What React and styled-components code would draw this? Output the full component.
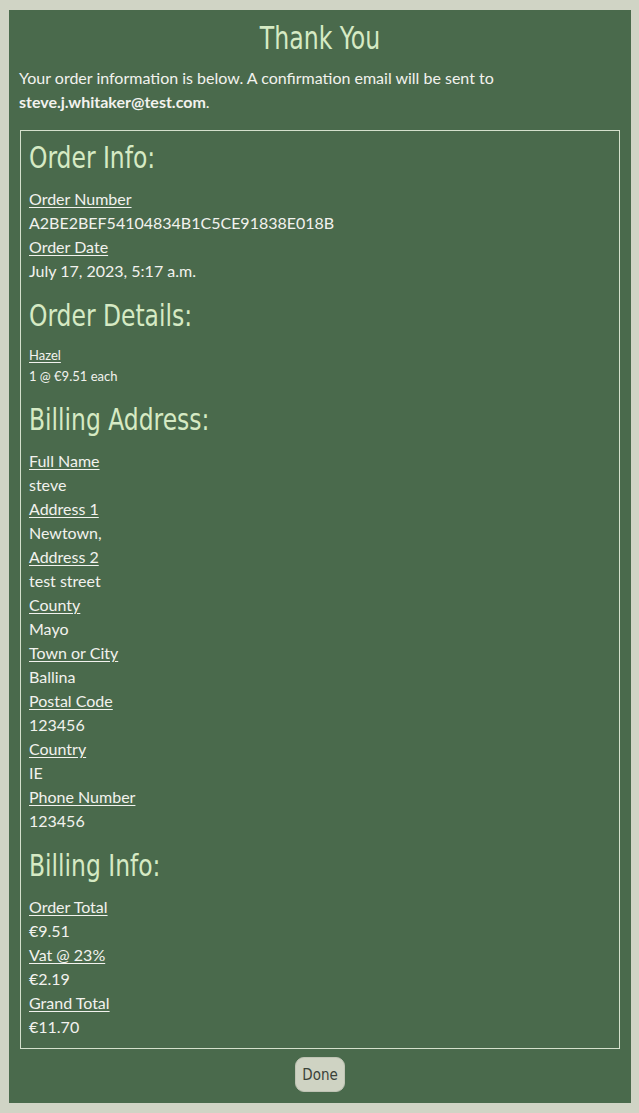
import React from 'react'
import styled, { createGlobalStyle } from 'styled-components'

const GlobalStyle = createGlobalStyle`
  html, body {
    margin: 0;
    padding: 0;
    background: #d0d4c5;
  }
  body {
    font-family: Lato, "Open Sans", sans-serif;
  }
`

const details = {
  number: 'A2BE2BEF54104834B1C5CE91838E018B',
  date: 'July 17, 2023, 5:17 a.m.',
}

const billing = [
  ['Full Name', 'steve'],
  ['Address 1', 'Newtown,'],
  ['Address 2', 'test street'],
  ['County', 'Mayo'],
  ['Town or City', 'Ballina'],
  ['Postal Code', '123456'],
  ['Country', 'IE'],
  ['Phone Number', '123456'],
]

const totals = [
  ['Order Total', '€9.51'],
  ['Vat @ 23%', '€2.19'],
  ['Grand Total', '€11.70'],
]

function App() {
  return (
    <>
      <GlobalStyle />
      <Page>
        <Panel>
          <Title>Thank You</Title>
          <Intro>
            Your order information is below. A confirmation email will be sent to{' '}
            <strong>steve.j.whitaker@test.com</strong>.
          </Intro>

          <Box>
            <Heading>Order Info:</Heading>
            <Label>Order Number</Label>
            <Value>{details.number}</Value>
            <Label>Order Date</Label>
            <Value>{details.date}</Value>

            <Heading>Order Details:</Heading>
            <Label small>Hazel</Label>
            <Value small>1 @ €9.51 each</Value>

            <Heading>Billing Address:</Heading>
            {billing.map(([label, value]) => (
              <React.Fragment key={label}>
                <Label>{label}</Label>
                <Value>{value}</Value>
              </React.Fragment>
            ))}

            <Heading>Billing Info:</Heading>
            {totals.map(([label, value]) => (
              <React.Fragment key={label}>
                <Label>{label}</Label>
                <Value>{value}</Value>
              </React.Fragment>
            ))}
          </Box>

          <Footer>
            <DoneButton>Done</DoneButton>
          </Footer>
        </Panel>
      </Page>
    </>
  )
}

export default App

const Page = styled.div`
  padding: 10px 8px 11px 9px;
`

const Panel = styled.div`
  background: #4a6a4c;
  padding: 8px 10px 11px 10px;
  color: #f2f2ee;
`

// headings use a narrow display face, squeezed to match
const Title = styled.h1`
  margin: 0;
  text-align: center;
  font-family: "DejaVu Sans Condensed", sans-serif;
  font-weight: 400;
  font-size: 32px;
  line-height: 40px;
  color: #d6eac4;
  transform: scaleX(0.82);
`

const Intro = styled.p`
  margin: 8px 0 16px 0;
  font-size: 16px;
  line-height: 24px;

  strong {
    font-weight: 700;
  }
`

const Box = styled.div`
  border: 1px solid #d4e0cc;
  margin: 0 1px;
  padding: 6px 9px 9px 8px;
`

const Heading = styled.h2`
  margin: 0 0 10px 0;
  font-family: "DejaVu Sans Condensed", sans-serif;
  font-weight: 400;
  font-size: 31px;
  line-height: 40px;
  color: #d6eac4;
  transform: scaleX(0.84);
  transform-origin: left center;

  &:not(:first-child) {
    margin-top: 12px;
  }
`

const Label = styled.div`
  font-size: ${p => (p.small ? '13px' : '16px')};
  line-height: ${p => (p.small ? '21px' : '24px')};
  text-decoration: underline;
  text-underline-offset: 2px;
`

const Value = styled.div`
  font-size: ${p => (p.small ? '13px' : '16px')};
  line-height: ${p => (p.small ? '21px' : '24px')};
`

const Footer = styled.div`
  display: flex;
  justify-content: center;
  padding-top: 8px;
`

const DoneButton = styled.button`
  background: #cfd3c3;
  border: 1px solid #bfc3b4;
  border-radius: 9px;
  padding: 0 6px;
  height: 35px;
  font-family: "DejaVu Sans Condensed", sans-serif;
  font-size: 15px;
  color: #3a4239;
  cursor: pointer;
`
